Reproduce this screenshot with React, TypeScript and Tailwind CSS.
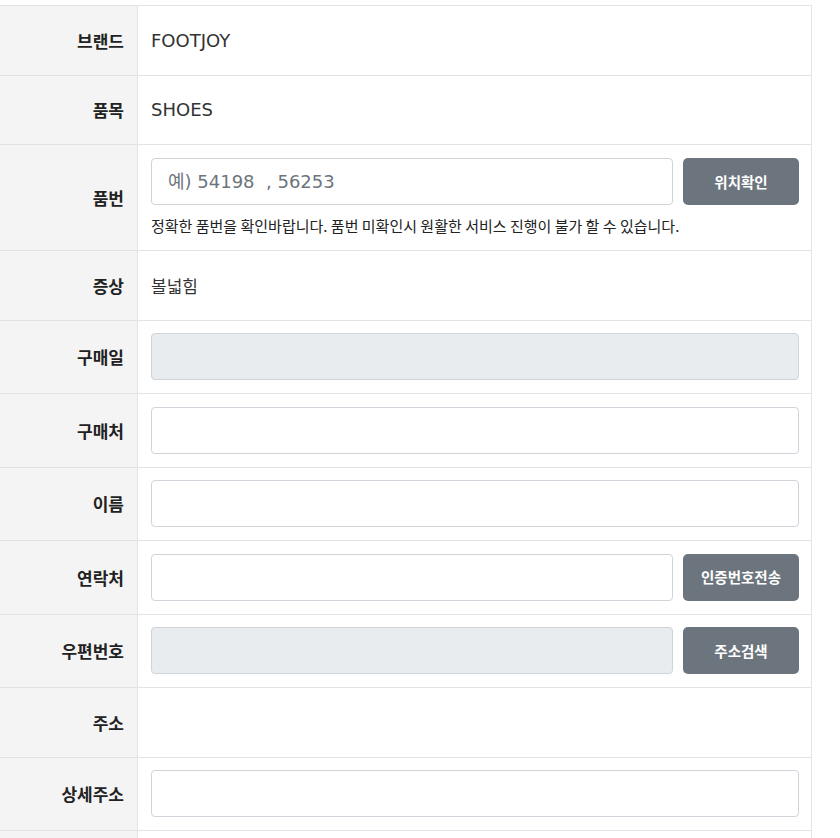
import React from 'react';

const ko = '"Noto Sans CJK KR", "Noto Sans", sans-serif';
const latin = '"DejaVu Sans", "Noto Sans CJK KR", sans-serif';

type RowProps = {
  label: string;
  children?: React.ReactNode;
  tall?: boolean;
};

// One label/value row of the form table
const Row: React.FC<RowProps> = ({ label, children, tall }) => (
  <div className="grid grid-cols-[138px_1fr] border-b border-[#e3e3e3]">
    <div
      className="flex items-center justify-end bg-[#f4f4f4] border-r border-[#e3e3e3] pr-[13px] text-[17px] font-bold text-[#222]"
      style={{ fontFamily: ko }}
    >
      {label}
    </div>
    <div className={`flex flex-col justify-center pl-[13px] pr-[12px] ${tall ? 'min-h-[72.5px]' : 'min-h-[68.5px]'}`}>
      {children}
    </div>
  </div>
);

const Input: React.FC<{ disabled?: boolean; placeholder?: string }> = ({ disabled, placeholder }) => (
  <input
    disabled={disabled}
    placeholder={placeholder}
    className={`h-[47px] w-full min-w-0 rounded-[4px] border border-[#ced4da] px-[16px] text-[18px] text-[#495057] placeholder:text-[#6c757d] outline-none ${
      disabled ? 'bg-[#e9ecef]' : 'bg-white'
    }`}
    style={{ fontFamily: latin }}
  />
);

const Button: React.FC<{ children: React.ReactNode }> = ({ children }) => (
  <button
    className="h-[47px] w-[116px] shrink-0 rounded-[5px] bg-[#6c757d] text-[14.5px] font-bold text-white"
    style={{ fontFamily: ko }}
  >
    {children}
  </button>
);

const Text: React.FC<{ children: React.ReactNode }> = ({ children }) => (
  <p className="text-[18px] text-[#333]" style={{ fontFamily: latin }}>
    {children}
  </p>
);

export default function App() {
  return (
    <div className="bg-white pt-[5px]">
      <div className="w-[812px] border-t border-r border-[#e3e3e3]">
        <Row label="브랜드">
          <Text>FOOTJOY</Text>
        </Row>
        <Row label="품목">
          <Text>SHOES</Text>
        </Row>
        <Row label="품번">
          <div className="flex flex-col pt-[13px] pb-[13px]">
            <div className="flex gap-[10px]">
              <Input placeholder="예) 54198  , 56253" />
              <Button>위치확인</Button>
            </div>
            <p className="mt-[10px] text-[15px] leading-[22px] text-[#222]" style={{ fontFamily: ko }}>
              정확한 품번을 확인바랍니다. 품번 미확인시 원활한 서비스 진행이 불가 할 수 있습니다.
            </p>
          </div>
        </Row>
        <Row label="증상">
          <p className="text-[17px] text-[#333]" style={{ fontFamily: ko }}>
            볼넓힘
          </p>
        </Row>
        <Row label="구매일" tall>
          <Input disabled />
        </Row>
        <Row label="구매처" tall>
          <Input />
        </Row>
        <Row label="이름" tall>
          <Input />
        </Row>
        <Row label="연락처" tall>
          <div className="flex gap-[10px]">
            <Input />
            <Button>인증번호전송</Button>
          </div>
        </Row>
        <Row label="우편번호" tall>
          <div className="flex gap-[10px]">
            <Input disabled />
            <Button>주소검색</Button>
          </div>
        </Row>
        <Row label="주소" />
        <Row label="상세주소" tall>
          <Input />
        </Row>
        <Row label="" tall>
          <Input />
        </Row>
      </div>
    </div>
  );
}
